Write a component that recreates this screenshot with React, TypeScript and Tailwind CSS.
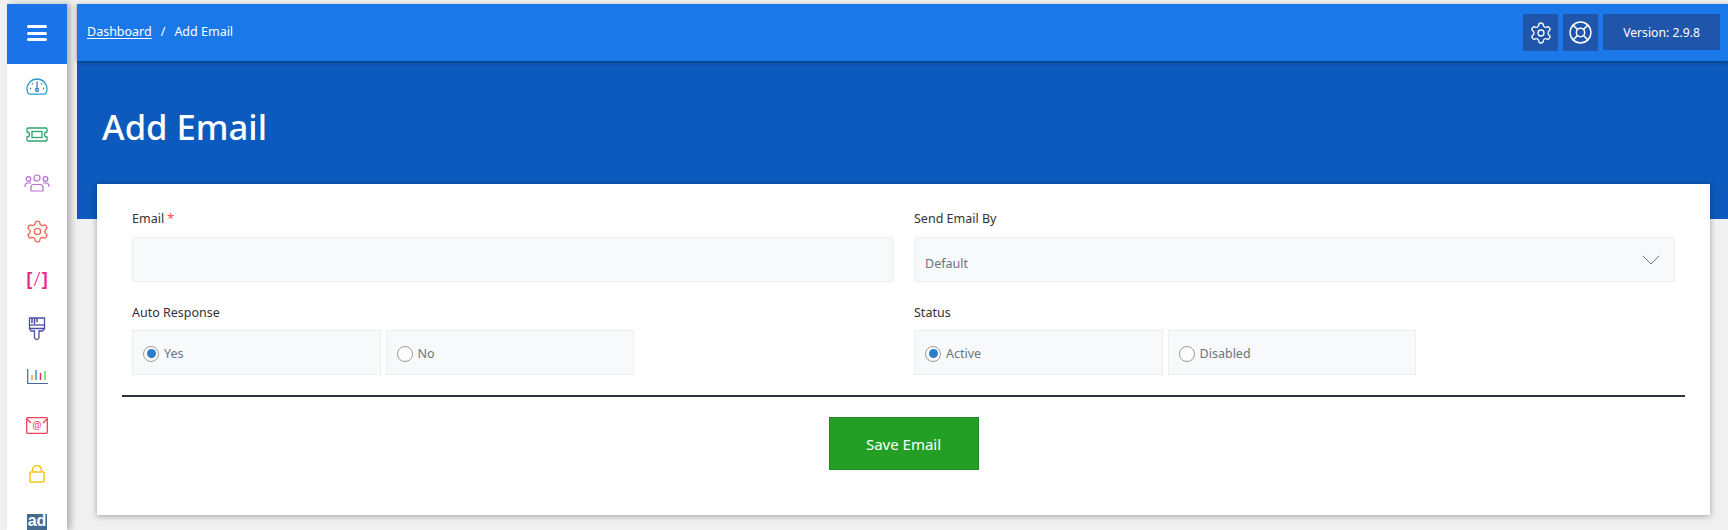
import { ChevronDown, LifeBuoy, Settings } from 'lucide-react';

function DashboardIcon() {
  return (
    <svg width="22" height="18" viewBox="0 0 22 18" fill="none" stroke="#2e9ccf" strokeWidth="1.300">
      <path d="M1 12a10 10 0 0 1 20 0c0 2.500-.8 4.600-2.500 5.200h-15C1.800 16.600 1 14.500 1 12z" />
      <circle cx="11" cy="13" r="1.500" stroke="#2e7fc0" />
      <path d="M11 4.500v7" stroke="#2e7fc0" />
      <path d="M4 11.500h1M17 11.500h1M6 6.500l.7.7M16 6.500l-.7.7" stroke="#555" />
    </svg>
  );
}

function TicketIcon() {
  return (
    <svg width="22" height="15" viewBox="0 0 22 15" fill="none" stroke="#2fa56d" strokeWidth="1.300">
      <path d="M2 1h18a1 1 0 0 1 1 1v3a2.500 2.500 0 0 0 0 5v3a1 1 0 0 1-1 1H2a1 1 0 0 1-1-1v-3a2.500 2.500 0 0 0 0-5V2a1 1 0 0 1 1-1z" />
      <rect x="6" y="4.500" width="10" height="6" />
    </svg>
  );
}

function UsersIcon() {
  return (
    <svg width="26" height="18" viewBox="0 0 26 18" fill="none" stroke="#b86fd6" strokeWidth="1.200">
      <circle cx="13" cy="4" r="3" />
      <circle cx="4.500" cy="5" r="2.300" />
      <circle cx="21.500" cy="5" r="2.300" />
      <path d="M7 17v-3.500a3 3 0 0 1 3-3h6a3 3 0 0 1 3 3V17z" />
      <path d="M1 13v-1.500a3 3 0 0 1 3-2.500h3M25 13v-1.500a3 3 0 0 0-3-2.500h-3" />
    </svg>
  );
}

function BrushIcon() {
  return (
    <svg width="18" height="23" viewBox="0 0 18 23" fill="none" stroke="#4a4fa6" strokeWidth="1.300">
      <path d="M1.500 1h15v10.500h-15z" />
      <path d="M1.500 8h15" />
      <path d="M1.500 11.500l1.500 2.500h3.500v6.500a2 2 0 0 0 2.500 1.800 2 2 0 0 0 2-1.800V14H14.500l2-2.500" />
      <path d="M4 1v5M6.500 1v6M9 1v4" strokeWidth="1.500" />
    </svg>
  );
}

function ChartIcon() {
  return (
    <svg width="21" height="16" viewBox="0 0 21 16" fill="none" strokeWidth="1.500">
      <path d="M.7 0v14.500H21" stroke="#45689a" strokeWidth="1.200" />
      <path d="M5 11V6" stroke="#f0a030" />
      <path d="M9 11V1" stroke="#3a8fd0" />
      <path d="M13.500 11V4" stroke="#e0364a" />
      <path d="M18 11V2" stroke="#5fd068" />
    </svg>
  );
}

function MailIcon() {
  return (
    <svg width="22" height="17" viewBox="0 0 22 17" fill="none" stroke="#f0405a" strokeWidth="1.300">
      <rect x="0.700" y="0.700" width="20.600" height="15.600" rx="1" />
      <path d="M1 2l4 4M21 2l-4 4" />
      <text x="11" y="12" fontSize="10" textAnchor="middle" fill="#f0405a" stroke="none" fontFamily="Noto Sans">@</text>
    </svg>
  );
}

function LockIcon() {
  return (
    <svg width="16" height="18" viewBox="0 0 16 18" fill="none" stroke="#f2c81e" strokeWidth="1.600">
      <rect x="1" y="7" width="14" height="10" rx="1" />
      <path d="M3.500 7V5a4.500 4.500 0 0 1 9 0v2" />
    </svg>
  );
}

function RadioBox({ label, checked }: { label: string; checked?: boolean }) {
  return (
    <label className="flex h-[45px] w-[248.600px] items-center gap-[5px] border border-[#ebedef] bg-[#f8f9fa] pl-[10px] text-[12.500px] text-[#6c757d]">
      <span className="mt-[2px] flex h-[16px] w-[16px] items-center justify-center rounded-full border border-[#9a9a9a] bg-white">
        {checked && <span className="h-[9px] w-[9px] rounded-full bg-[#2b7dc9]" />}
      </span>
      <span className="pt-[3px]">{label}</span>
    </label>
  );
}

export default function App() {
  const iconRows = [
    <DashboardIcon key="dash" />,
    <TicketIcon key="ticket" />,
    <UsersIcon key="users" />,
    <Settings key="gear" size={25} color="#f0695a" strokeWidth={1.300} />,
    <span key="code" className="-mt-[3px] flex items-center gap-[1px] text-[20px] leading-none text-[#e9288f]">
      <span className="font-semibold">[</span>
      <span className="font-light">/</span>
      <span className="font-semibold">]</span>
    </span>,
    <BrushIcon key="brush" />,
    <ChartIcon key="chart" />,
    <MailIcon key="mail" />,
    <LockIcon key="lock" />,
    <span key="ad" className="mt-[3px] flex h-[20px] w-[20px] items-start justify-center bg-[#456a8f] font-['Liberation_Sans',sans-serif] text-[16px] leading-[14px] font-bold text-white">ad</span>,
  ];

  return (
    <div className="flex h-[530px] gap-[10px] overflow-hidden bg-[#f0f0f0] pt-[4px] pl-[7px] font-['Noto_Sans','Open_Sans',sans-serif]">
      <aside className="relative z-10 w-[60px] shrink-0 bg-white shadow-[4px_0_6px_rgba(0,0,0,0.25)]">
        <div className="flex h-[60px] items-center justify-center bg-[#1a73e8] pb-[2px]">
          <div className="flex w-[20px] flex-col gap-[3.500px]">
            <span className="h-[3px] rounded-sm bg-white" />
            <span className="h-[3px] rounded-sm bg-white" />
            <span className="h-[3px] rounded-sm bg-white" />
          </div>
        </div>
        <nav className="flex flex-col gap-[4.500px]">
          {iconRows.map((icon, i) => (
            <div key={i} className="flex h-[44px] items-center justify-center">
              {icon}
            </div>
          ))}
        </nav>
      </aside>

      <main className="min-w-0 flex-1">
        <header className="relative z-10 flex h-[57px] items-center justify-between bg-[#1a78e8] pr-[8px] pl-[10px] text-[12.500px] text-white shadow-[0_1px_4px_rgba(0,0,0,0.4)]">
          <div className="flex items-center gap-[9px]">
            <a className="underline underline-offset-2">Dashboard</a>
            <span>/</span>
            <span>Add Email</span>
          </div>
          <div className="flex items-start gap-[5px]">
            <button className="flex h-[37px] w-[35px] items-center justify-center bg-[#1f55aa]">
              <Settings size={24} strokeWidth={1.300} />
            </button>
            <button className="flex h-[37px] w-[35px] items-center justify-center bg-[#1f55aa]">
              <LifeBuoy size={25} strokeWidth={1.400} />
            </button>
            <div className="flex h-[36px] w-[117px] items-center justify-center bg-[#1f55aa] pt-[3px] text-[12.200px]">
              Version: 2.9.8
            </div>
          </div>
        </header>

        <section className="flex h-[158px] bg-[#0c5abd] pt-[43px] pl-[25px]">
          <h1 className="text-[34.600px] leading-[45px] font-medium text-white">Add Email</h1>
        </section>

        <section className="relative mr-[18px] -mt-[35px] ml-[20px] h-[331px] bg-white px-[25px] pt-[17px] shadow-[0_1px_6px_rgba(0,0,0,0.35)]">
          <div className="grid grid-cols-[762px_761px] gap-x-[20px] px-[10px]">
            <div>
              <label className="block h-[36px] pt-[9px] text-[12.500px] leading-[18px] text-[#333]">
                Email <span className="text-[#f44]">*</span>
              </label>
              <input className="h-[45px] w-full rounded-[3px] border border-[#ebedef] bg-[#f8f9fa]" />
            </div>
            <div>
              <label className="block h-[36px] pt-[9px] text-[12.500px] leading-[18px] text-[#333]">Send Email By</label>
              <div className="flex h-[45px] items-center justify-between rounded-[3px] border border-[#ebedef] bg-[#f8f9fa] pr-[7px] pl-[10px] text-[12.500px] text-[#6c757d]">
                <span className="pt-[10px]">Default</span>
                <ChevronDown size={32} strokeWidth={0.750} />
              </div>
            </div>
            <div className="mt-[20px]">
              <label className="block h-[28px] pt-[2px] text-[12.500px] leading-[18px] text-[#333]">Auto Response</label>
              <div className="flex gap-[5px]">
                <RadioBox label="Yes" checked />
                <RadioBox label="No" />
              </div>
            </div>
            <div className="mt-[20px]">
              <label className="block h-[28px] pt-[2px] text-[12.500px] leading-[18px] text-[#333]">Status</label>
              <div className="flex gap-[5px]">
                <RadioBox label="Active" checked />
                <RadioBox label="Disabled" />
              </div>
            </div>
          </div>
          <hr className="mt-[20px] h-[2px] border-0 bg-[#2f3237]" />
          <div className="mt-[20px] flex justify-center">
            <button className="h-[53px] w-[150px] border border-[#1f8a1f] bg-[#229f24] pt-[2px] text-[15px] text-white">
              Save Email
            </button>
          </div>
        </section>
      </main>
    </div>
  );
}
